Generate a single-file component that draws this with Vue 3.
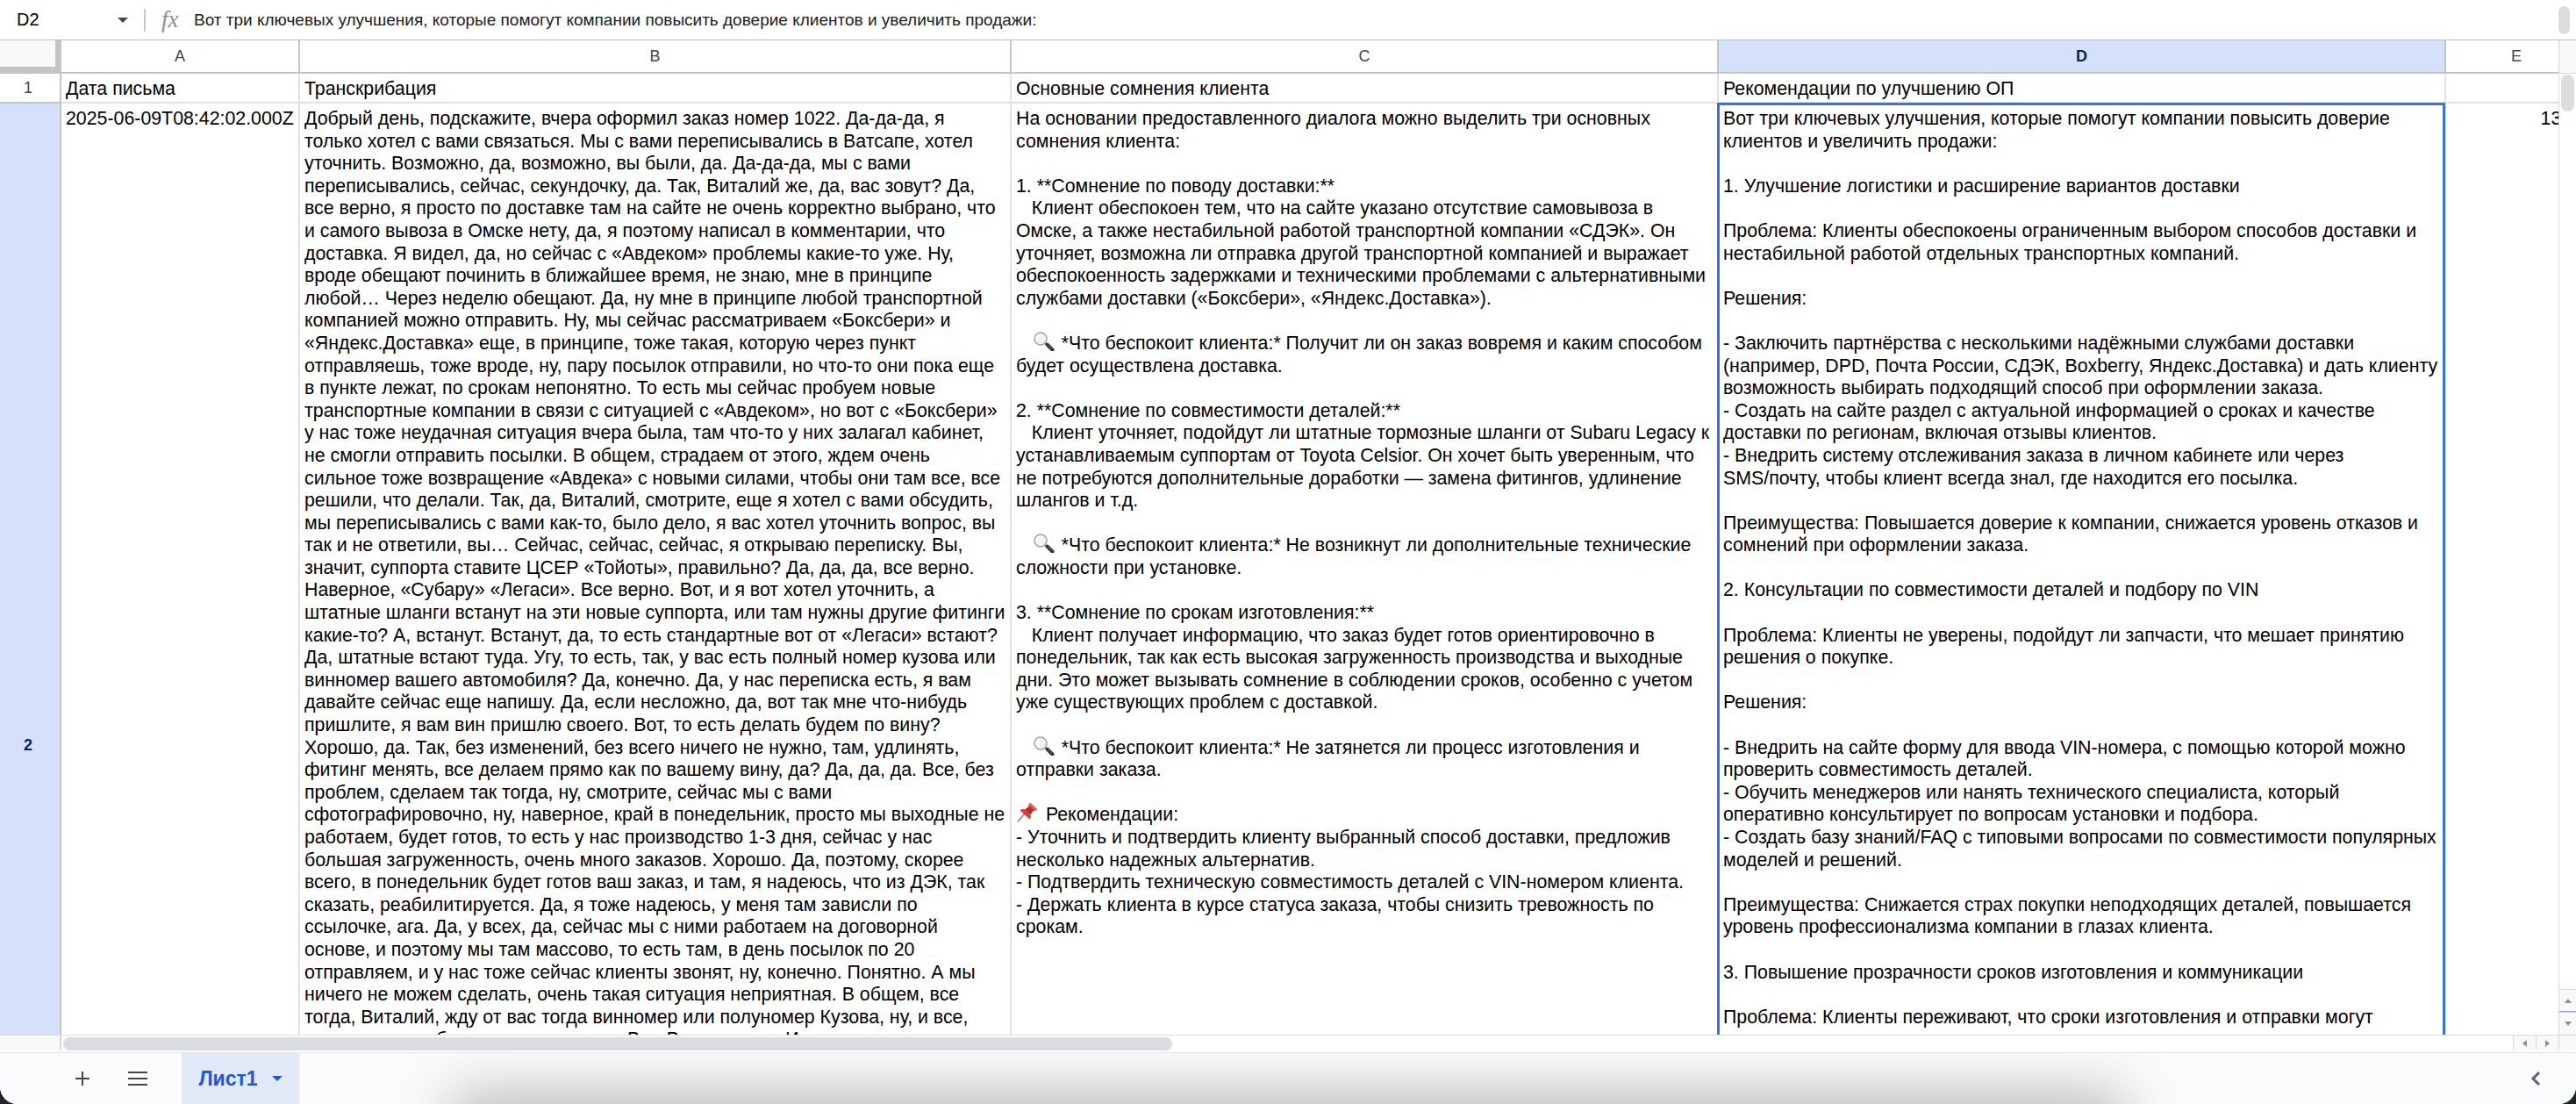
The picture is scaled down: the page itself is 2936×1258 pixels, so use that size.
<script setup>
import { ref } from 'vue'

const cellName = ref('D2')
const formula = ref('Вот три ключевых улучшения, которые помогут компании повысить доверие клиентов и увеличить продажи:')

const columns = [
  { id: 'A', title: 'Дата письма' },
  { id: 'B', title: 'Транскрибация' },
  { id: 'C', title: 'Основные сомнения клиента' },
  { id: 'D', title: 'Рекомендации по улучшению ОП' },
  { id: 'E', title: '' },
]

const transcript =
  'Добрый день, подскажите, вчера оформил заказ номер 1022. Да-да-да, я только хотел с вами связаться. Мы с вами переписывались в Ватсапе, хотел уточнить. Возможно, да, возможно, вы были, да. Да-да-да, мы с вами переписывались, сейчас, секундочку, да. Так, Виталий же, да, вас зовут? Да, все верно, я просто по доставке там на сайте не очень корректно выбрано, что и самого вывоза в Омске нету, да, я поэтому написал в комментарии, что доставка. Я видел, да, но сейчас с «Авдеком» проблемы какие-то уже. Ну, вроде обещают починить в ближайшее время, не знаю, мне в принципе любой… Через неделю обещают. Да, ну мне в принципе любой транспортной компанией можно отправить. Ну, мы сейчас рассматриваем «Боксбери» и «Яндекс.Доставка» еще, в принципе, тоже такая, которую через пункт отправляешь, тоже вроде, ну, пару посылок отправили, но что-то они пока еще в пункте лежат, по срокам непонятно. То есть мы сейчас пробуем новые транспортные компании в связи с ситуацией с «Авдеком», но вот с «Боксбери» у нас тоже неудачная ситуация вчера была, там что-то у них залагал кабинет, не смогли отправить посылки. В общем, страдаем от этого, ждем очень сильное тоже возвращение «Авдека» с новыми силами, чтобы они там все, все решили, что делали. Так, да, Виталий, смотрите, еще я хотел с вами обсудить, мы переписывались с вами как-то, было дело, я вас хотел уточнить вопрос, вы так и не ответили, вы… Сейчас, сейчас, сейчас, я открываю переписку. Вы, значит, суппорта ставите ЦСЕР «Тойоты», правильно? Да, да, да, все верно. Наверное, «Субару» «Легаси». Все верно. Вот, и я вот хотел уточнить, а штатные шланги встанут на эти новые суппорта, или там нужны другие фитинги какие-то? А, встанут. Встанут, да, то есть стандартные вот от «Легаси» встают? Да, штатные встают туда. Угу, то есть, так, у вас есть полный номер кузова или винномер вашего автомобиля? Да, конечно. Да, у нас переписка есть, я вам давайте сейчас еще напишу. Да, если несложно, да, вот так мне что-нибудь пришлите, я вам вин пришлю своего. Вот, то есть делать будем по вину? Хорошо, да. Так, без изменений, без всего ничего не нужно, там, удлинять, фитинг менять, все делаем прямо как по вашему вину, да? Да, да, да. Все, без проблем, сделаем так тогда, ну, смотрите, сейчас мы с вами сфотографировочно, ну, наверное, край в понедельник, просто мы выходные не работаем, будет готов, то есть у нас производство 1-3 дня, сейчас у нас большая загруженность, очень много заказов. Хорошо. Да, поэтому, скорее всего, в понедельник будет готов ваш заказ, и там, я надеюсь, что из ДЭК, так сказать, реабилитируется. Да, я тоже надеюсь, у меня там зависли по ссылочке, ага. Да, у всех, да, сейчас мы с ними работаем на договорной основе, и поэтому мы там массово, то есть там, в день посылок по 20 отправляем, и у нас тоже сейчас клиенты звонят, ну, конечно. Понятно. А мы ничего не можем сделать, очень такая ситуация неприятная. В общем, все тогда, Виталий, жду от вас тогда винномер или полуномер Кузова, ну, и все, и\u00a0по этому все будет потом понятно. Вот. Все, хорошо. И'

// Lines of column C; `icon` puts a pictogram between the indent and the text.
const doubts = [
  { text: 'На основании предоставленного диалога можно выделить три основных сомнения клиента:' },
  { text: '' },
  { text: '1. **Сомнение по поводу доставки:**' },
  { text: '   Клиент обеспокоен тем, что на сайте указано отсутствие самовывоза в Омске, а также нестабильной работой транспортной компании «СДЭК». Он уточняет, возможна ли отправка другой транспортной компанией и выражает обеспокоенность задержками и техническими проблемами с альтернативными службами доставки («Боксбери», «Яндекс.Доставка»).' },
  { text: '' },
  { indent: '   ', icon: 'lens', text: ' *Что беспокоит клиента:* Получит ли он заказ вовремя и каким способом будет осуществлена доставка.' },
  { text: '' },
  { text: '2. **Сомнение по совместимости деталей:**' },
  { text: '   Клиент уточняет, подойдут ли штатные тормозные шланги от Subaru Legacy к устанавливаемым суппортам от Toyota Celsior. Он хочет быть уверенным, что не потребуются дополнительные доработки — замена фитингов, удлинение шлангов и т.д.' },
  { text: '' },
  { indent: '   ', icon: 'lens', text: ' *Что беспокоит клиента:* Не возникнут ли дополнительные технические сложности при установке.' },
  { text: '' },
  { text: '3. **Сомнение по срокам изготовления:**' },
  { text: '   Клиент получает информацию, что заказ будет готов ориентировочно в понедельник, так как есть высокая загруженность производства и выходные дни. Это может вызывать сомнение в соблюдении сроков, особенно с учетом уже существующих проблем с доставкой.' },
  { text: '' },
  { indent: '   ', icon: 'lens', text: ' *Что беспокоит клиента:* Не затянется ли процесс изготовления и отправки заказа.' },
  { text: '' },
  { indent: '', icon: 'pin', text: ' Рекомендации:' },
  { text: '- Уточнить и подтвердить клиенту выбранный способ доставки, предложив несколько надежных альтернатив.' },
  { text: '- Подтвердить техническую совместимость деталей с VIN-номером клиента.' },
  { text: '- Держать клиента в курсе статуса заказа, чтобы снизить тревожность по срокам.' },
]

const advice = `Вот три ключевых улучшения, которые помогут компании повысить доверие клиентов и увеличить продажи:

1. Улучшение логистики и расширение вариантов доставки

Проблема: Клиенты обеспокоены ограниченным выбором способов доставки и нестабильной работой отдельных транспортных компаний.

Решения:

- Заключить партнёрства с несколькими надёжными службами доставки (например, DPD, Почта России, СДЭК, Boxberry, Яндекс.Доставка) и дать клиенту возможность выбирать подходящий способ при оформлении заказа.
- Создать на сайте раздел с актуальной информацией о сроках и качестве доставки по регионам, включая отзывы клиентов.
- Внедрить систему отслеживания заказа в личном кабинете или через
SMS/почту, чтобы клиент всегда знал, где находится его посылка.

Преимущества: Повышается доверие к компании, снижается уровень отказов и сомнений при оформлении заказа.

2. Консультации по совместимости деталей и подбору по VIN

Проблема: Клиенты не уверены, подойдут ли запчасти, что мешает принятию решения о покупке.

Решения:

- Внедрить на сайте форму для ввода VIN-номера, с помощью которой можно проверить совместимость деталей.
- Обучить менеджеров или нанять технического специалиста, который оперативно консультирует по вопросам установки и подбора.
- Создать базу знаний/FAQ с типовыми вопросами по совместимости популярных моделей и решений.

Преимущества: Снижается страх покупки неподходящих деталей, повышается уровень профессионализма компании в глазах клиента.

3. Повышение прозрачности сроков изготовления и коммуникации

Проблема: Клиенты переживают, что сроки изготовления и отправки могут`
</script>

<template>
  <div class="app">
    <header class="formula-bar">
      <input v-model="cellName" class="name-box" aria-label="Имя ячейки" />
      <button class="name-menu" aria-label="Диапазоны">
        <svg width="12" height="6" viewBox="0 0 12 6"><path d="M0 0h12L6 6z" fill="#444746" /></svg>
      </button>
      <span class="divider"></span>
      <label class="fx" for="formula">fx</label>
      <input id="formula" v-model="formula" class="formula" />
      <span class="formula-thumb"></span>
    </header>

    <main class="sheet">
      <div class="viewport">
        <table>
          <colgroup>
            <col class="w-head" />
            <col v-for="c in columns" :key="c.id" :class="'w-' + c.id" />
          </colgroup>
          <thead>
            <tr>
              <td class="corner"></td>
              <th v-for="c in columns" :key="c.id" scope="col" :class="{ active: c.id === 'D' }">{{ c.id }}</th>
            </tr>
          </thead>
          <tbody>
            <tr class="row-1">
              <th scope="row">1</th>
              <td v-for="c in columns" :key="c.id">{{ c.title }}</td>
            </tr>
            <tr class="row-2">
              <th scope="row" class="active">2</th>
              <td>2025-06-09T08:42:02.000Z</td>
              <td>{{ transcript }}</td>
              <td>
                <div v-for="(line, i) in doubts" :key="i" class="line">{{ line.indent }}<svg v-if="line.icon === 'lens'" class="emoji" viewBox="0 0 28 22"><path d="M15 13l3 3" stroke="#8d9499" stroke-width="2" /><path d="M17.500 14.500l6 6" stroke="#30343a" stroke-width="4" stroke-linecap="round" /><path d="M18 14.500l5 5" stroke="#777d84" stroke-width="1" /><circle cx="10" cy="8" r="7" fill="#eef3f6" stroke="#9ba5ad" stroke-width="1.500" /><path d="M5.500 8a5 5 0 0 1 4-4.500" fill="none" stroke="#fff" stroke-width="2" /></svg><svg v-if="line.icon === 'pin'" class="emoji" viewBox="0 0 28 22"><path d="M2 21.500L10 12" stroke="#8fa0b2" stroke-width="2" /><path d="M4.500 8.500c2-2 4.500-1.500 6-1l4-3.500c-.5-2 .5-3.500 1.500-4l8 7.500c-1.500 1.500-3 1.500-4 1l-3.500 4.500c.5 2 .5 4-1 5.500z" fill="#d3403c" /><path d="M10.500 7.500l4-3.500 5.500 4.500-3.500 4.500z" fill="#b32d2f" /><path d="M16 .5l7.500 7" stroke="#ee7468" stroke-width="2" /></svg>{{ line.text }}</div>
              </td>
              <td class="selected">{{ advice }}</td>
              <td class="number">1310</td>
            </tr>
          </tbody>
        </table>
      </div>

      <div class="v-scroll">
        <span class="v-top"></span>
        <span class="v-track"><span class="v-thumb"></span></span>
        <button class="step up" aria-label="Вверх">
          <svg width="8" height="5" viewBox="0 0 8 5"><path d="M0 5h8L4 0z" fill="#8f8f8f" /></svg>
        </button>
        <button class="step" aria-label="Вниз">
          <svg width="8" height="5" viewBox="0 0 8 5"><path d="M0 0h8L4 5z" fill="#8f8f8f" /></svg>
        </button>
      </div>

      <div class="h-scroll">
        <span class="h-head"></span>
        <span class="h-track"><span class="h-thumb"></span></span>
        <button class="step" aria-label="Влево">
          <svg width="5" height="8" viewBox="0 0 5 8"><path d="M5 0v8L0 4z" fill="#8f8f8f" /></svg>
        </button>
        <button class="step" aria-label="Вправо">
          <svg width="5" height="8" viewBox="0 0 5 8"><path d="M0 0v8l5-4z" fill="#8f8f8f" /></svg>
        </button>
      </div>
      <span class="scroll-corner"></span>
    </main>

    <footer class="tabs">
      <button class="icon" aria-label="Добавить лист">
        <svg width="24" height="24" viewBox="0 0 24 24"><path d="M12 4v16M4 12h16" stroke="#444746" stroke-width="2" /></svg>
      </button>
      <button class="icon" aria-label="Все листы">
        <svg width="24" height="24" viewBox="0 0 24 24"><path d="M1 5h22M1 12h22M1 19h22" stroke="#444746" stroke-width="2" /></svg>
      </button>
      <button class="tab">
        Лист1
        <svg width="12" height="6" viewBox="0 0 12 6"><path d="M0 0h12L6 6z" fill="#2456cc" /></svg>
      </button>
      <button class="icon collapse" aria-label="Показать панель">
        <svg width="24" height="24" viewBox="0 0 24 24"><path d="M16 5l-7 7 7 7" fill="none" stroke="#5f6368" stroke-width="3" /></svg>
      </button>
    </footer>
  </div>
</template>

<style>
body {
  margin: 0;
  background: #20252d;
}
</style>

<style scoped>
.app {
  display: flex;
  flex-direction: column;
  height: 100vh;
  overflow: hidden;
  background: #fff;
  border-radius: 0 0 20px 20px;
  font-family: "Liberation Sans", Arial, sans-serif;
  color: #000;
}
button {
  display: flex;
  align-items: center;
  justify-content: center;
  padding: 0;
  border: 0;
  background: none;
  font: inherit;
}
input {
  padding: 0;
  border: 0;
  outline: 0;
  background: none;
  font: inherit;
}

/* Formula bar */
.formula-bar {
  display: flex;
  align-items: center;
  flex: none;
  height: 45px;
  padding-left: 19px;
  padding-right: 7px;
  border-bottom: 1px solid #c0c0c0;
}
.name-box {
  width: 110px;
  font-size: 20px;
}
.name-menu {
  width: 22px;
  height: 24px;
}
.divider {
  width: 2px;
  height: 26px;
  margin-left: 13px;
  background: #c7c7c7;
}
.fx {
  width: 37px;
  margin-left: 18px;
  font-family: "Liberation Serif", "Times New Roman", serif;
  font-size: 27px;
  font-style: italic;
  color: #8f8f8f;
}
.formula {
  flex: 1;
  min-width: 0;
  font-size: 19px;
  color: #202124;
}
.formula-thumb {
  width: 13px;
  height: 32px;
  border-radius: 7px;
  background: #dadce0;
}

/* Grid */
.sheet {
  display: grid;
  flex: 1;
  grid-template-columns: minmax(0, 1fr) 20px;
  grid-template-rows: minmax(0, 1fr) 18px;
  min-height: 0;
}
.viewport {
  overflow: hidden;
}
table {
  width: 2950px;
  table-layout: fixed;
  border-collapse: separate;
  border-spacing: 0;
}
.w-head { width: 70px; }
.w-A { width: 272px; }
.w-B { width: 811px; }
.w-C { width: 806px; }
.w-D { width: 829px; }
.w-E { width: 162px; }
th, td {
  box-sizing: border-box;
  border-right: 2px solid #e2e2e2;
  border-bottom: 2px solid #e2e2e2;
}
th {
  padding: 0;
  border-color: #c4c4c4;
  font-size: 18px;
  font-weight: 400;
  color: #444746;
}
tbody th {
  padding-right: 4px;
}
th.active {
  background: #d5e1fb;
  font-weight: 700;
  color: #0b1f4f;
}
thead th {
  height: 38px;
}
td {
  padding: 5px 5px 0;
  font-size: 16pt;
  line-height: 1.2;
  vertical-align: top;
  white-space: pre-wrap;
}
.corner {
  border-right: 7px solid #c4c4c4;
  border-bottom: 8px solid #c4c4c4;
  background: #f8f9fa;
}
.row-1 {
  height: 34px;
}
.row-2 {
  height: 1464px;
}
.line {
  min-height: 1.2em;
}
.emoji {
  width: 28px;
  height: 22px;
  margin-top: -4px;
  vertical-align: -2px;
}
.selected {
  position: relative;
}
.selected::after {
  content: "";
  position: absolute;
  inset: -1px -1px 0 -2px;
  border: 3px solid #3871e0;
}
.number {
  text-align: right;
}

/* Scroll bars */
.v-scroll {
  display: flex;
  flex-direction: column;
  border-left: 1px solid #d9d9d9;
}
.v-top {
  height: 37px;
  border-bottom: 1px solid #d9d9d9;
  background: #f8f8f8;
}
.v-track {
  display: flex;
  flex: 1;
  justify-content: center;
  padding-top: 1px;
}
.v-thumb {
  width: 15px;
  height: 42px;
  border-radius: 8px;
  background: #dadce0;
}
.step {
  box-sizing: border-box;
  width: 26px;
  border-left: 1px solid #d9d9d9;
  background: #f8f8f8;
}
.v-scroll .step {
  width: 19px;
  height: 26px;
  border-left: 0;
  border-top: 1px solid #d9d9d9;
}
.v-scroll .up {
  border-bottom: 1px solid #8ea2ee;
}
.h-scroll {
  display: flex;
  border-top: 1px solid #dcdcdc;
}
.h-head {
  box-sizing: border-box;
  width: 70px;
  border-right: 2px solid #d9d9d9;
  background: #f8f8f8;
}
.h-track {
  flex: 1;
  padding: 2px 2px 0;
}
.h-thumb {
  display: block;
  width: calc(45% + 8px);
  height: 15px;
  border-radius: 8px;
  background: #dadce0;
}
.scroll-corner {
  border-top: 1px solid #d9d9d9;
  border-left: 1px solid #d9d9d9;
  background: #f8f8f8;
}

/* Sheet tabs */
.tabs {
  position: relative;
  display: flex;
  flex: none;
  height: 58px;
  margin-top: 2px;
  padding-left: 82px;
  border-top: 1px solid #e1e3e1;
  overflow: hidden;
  background: #f9fbfd;
}
/* Soft shadow rising from the lower edge of the window */
.tabs::after {
  content: "";
  position: absolute;
  left: 18%;
  right: 18%;
  top: 100%;
  height: 60px;
  box-shadow: 0 0 64px 14px rgba(0, 0, 0, 0.25);
  pointer-events: none;
}
.icon {
  width: 24px;
}
.icon + .icon {
  margin-left: 39px;
}
.tab {
  gap: 16px;
  width: 134px;
  margin-left: 38px;
  background: #e1e9f7;
  font-size: 23px;
  font-weight: 700;
  color: #2456cc;
}
.collapse {
  margin-left: auto;
  margin-right: 34px;
}
</style>
